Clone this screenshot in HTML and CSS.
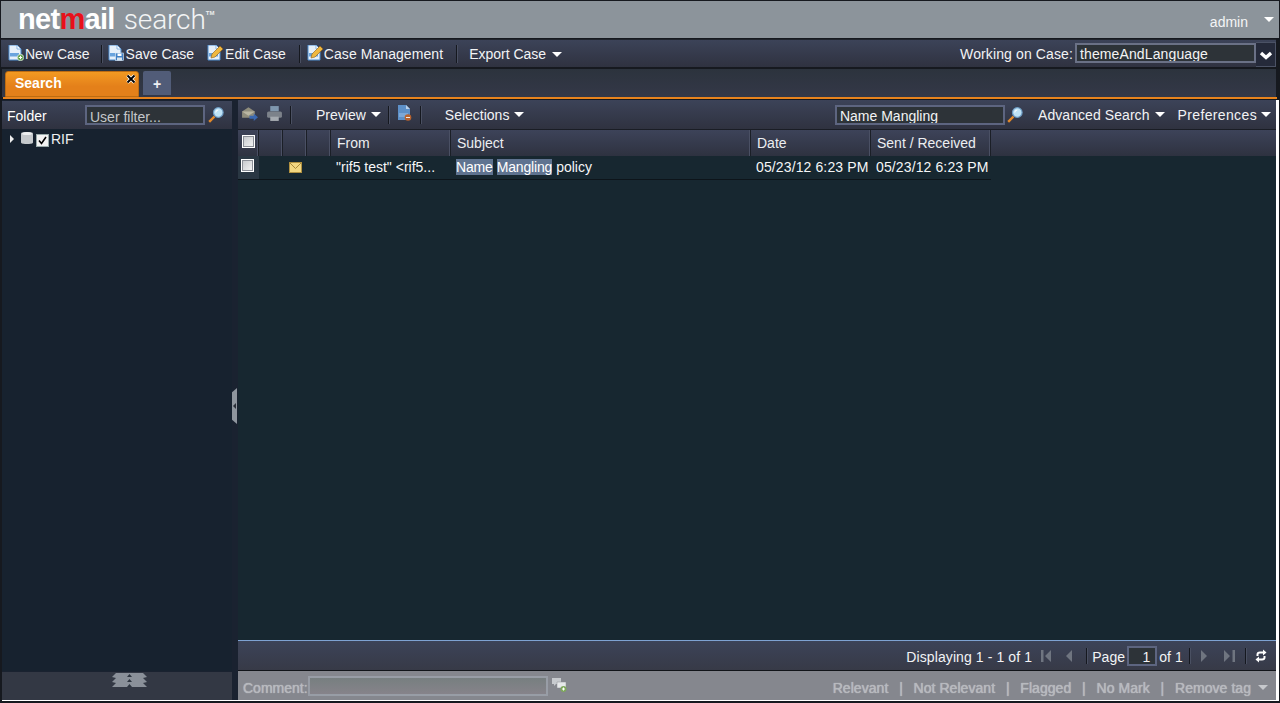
FILE: index.html
```html
<!DOCTYPE html>
<html lang="en">
<head>
<meta charset="utf-8">
<title>Netmail Search</title>
<link rel="stylesheet" href="styles.css">
</head>
<body>
<div class="app">
  <header class="brandbar">
    <div class="logo"><span class="logo-net">net<span class="logo-m">m</span>ail</span><span class="logo-search">search</span><span class="logo-tm">TM</span></div>
    <div class="user"><span>admin</span><i class="caret user-caret"></i></div>
  </header>

  <nav class="casebar">
    <a class="tool"><svg class="ico" viewBox="0 0 16 16"><use href="#doc"/><circle cx="12.500" cy="12.500" r="3.200" fill="#5fa04a" stroke="#fff" stroke-width=".6"/><path d="M10.800 12.500h3.400M12.500 10.800v3.400" stroke="#fff"/></svg>New Case</a>
    <i class="sep sep-new"></i>
    <a class="tool save"><svg class="ico" viewBox="0 0 16 16"><use href="#doc"/><rect x="7.500" y="8" width="8" height="7.500" fill="#3f7fc4" stroke="#e4eef8" stroke-width=".6"/><rect x="9.500" y="8.500" width="4" height="2.500" fill="#fff"/><rect x="9" y="12.500" width="5" height="3" fill="#d8e4ee"/></svg>Save Case</a>
    <a class="tool edit"><svg class="ico" viewBox="0 0 16 16"><use href="#doc"/><path d="M4 13l1-4 8-8 3 3-8 8z" fill="#f0b840" stroke="#8a5a18" stroke-width=".6"/></svg>Edit Case</a>
    <i class="sep sep-edit"></i>
    <a class="tool manage"><svg class="ico" viewBox="0 0 16 16"><use href="#doc"/><path d="M4 13l1-4 8-8 3 3-8 8z" fill="#f0b840" stroke="#8a5a18" stroke-width=".6"/></svg>Case Management</a>
    <i class="sep sep-wide"></i>
    <a class="tool export">Export Case<i class="caret"></i></a>
    <div class="case-select">
      <label class="case-label">Working on Case:</label>
      <div class="case-input">themeAndLanguage</div>
      <div class="case-btn"><svg viewBox="0 0 14 9" width="14" height="9"><path d="M2 2l5 4.500L12 2" fill="none" stroke="#fff" stroke-width="3.400"/></svg></div>
    </div>
  </nav>

  <div class="tabbar">
    <div class="tab-active">Search<svg class="tab-close" viewBox="0 0 10 10" width="10" height="10"><path d="M1.500 1.500l7 7M8.500 1.500l-7 7" stroke="#fff" stroke-width="3.400"/><path d="M1.500 1.500l7 7M8.500 1.500l-7 7" stroke="#000" stroke-width="1.800"/></svg></div>
    <div class="tab-add">+</div>
  </div>
  <div class="tab-rule"></div>

  <div class="workspace">
    <aside class="folders">
      <div class="folders-head">
        <span class="folders-title">Folder</span>
        <div class="field filter">User filter...</div>
        <svg class="lens" viewBox="0 0 16 16"><use href="#lens"/></svg>
      </div>
      <div class="tree">
        <div class="tree-row">
          <i class="tree-arrow"></i>
          <svg class="db" viewBox="0 0 12 14" width="12" height="14"><path d="M0 2.500C0 .5 12 .5 12 2.500V11.500C12 13.500 0 13.500 0 11.500Z" fill="#c5c9cc"/><ellipse cx="6" cy="2.500" rx="5" ry="1.600" fill="#eef0f1"/></svg>
          <svg class="tree-check" viewBox="0 0 13 13" width="13" height="13"><rect x=".5" y=".5" width="12" height="12" fill="#f2f2f2" stroke="#9aa"/><path d="M3 6.500l2.500 3L10 3" fill="none" stroke="#000" stroke-width="1.600"/></svg>
          <span>RIF</span>
        </div>
      </div>
      <div class="folders-foot">
        <svg viewBox="0 0 35 15" width="35" height="15"><path d="M4 0h27l4 4-4 1 4 4-4 1 4 4H0l4-4-4-1 4-4-4-1z" fill="#8a9099"/><path d="M17.500 1l2.500 3h-5zM17.500 6l2.500 3h-5zM17.500 11l2.500 3h-5z" fill="#2e3540"/></svg>
      </div>
      <div class="grip"><i></i></div>
    </aside>

    <main class="results">
      <div class="res-toolbar">
        <svg class="ico-sm first" viewBox="0 0 16 16"><path d="M1 6l6-4 6 4v6H1z" fill="#8f8d7c"/><path d="M1 6l6 4 6-4" fill="#b9b6a2"/><path d="M8 10h4V8l4 3.500-4 3.500v-2H8z" fill="#3a68b0"/></svg>
        <svg class="ico-sm" viewBox="0 0 16 16"><rect x="4" y="1" width="8" height="5" fill="#7f97ae"/><rect x="1" y="6" width="14" height="6" rx="1.500" fill="#7c828a"/><rect x="4" y="11" width="8" height="4" fill="#a5aab0"/></svg>
        <i class="sep sep-tall"></i>
        <a class="tool pv">Preview<i class="caret"></i></a>
        <i class="sep sep-tall"></i>
        <svg class="ico del" viewBox="0 0 16 16"><path d="M2 0h8l4 4v11H2z" fill="#5d90c8"/><path d="M10 0v4h4z" fill="#b8d0ea"/><rect x="3" y="8" width="9" height="4" fill="#7ca8d8"/><circle cx="12" cy="12.500" r="3.300" fill="#b8622e"/><path d="M10 12.500h4" stroke="#eee"/></svg>
        <i class="sep sep-tall sep-after-del"></i>
        <a class="tool sel">Selections<i class="caret"></i></a>
        <div class="spacer"></div>
        <div class="field query">Name Mangling</div>
        <svg class="lens" viewBox="0 0 16 16"><use href="#lens"/></svg>
        <a class="tool adv">Advanced Search<i class="caret"></i></a>
        <a class="tool prefs">Preferences<i class="caret"></i></a>
      </div>

      <div class="grid-head">
        <div class="hcell c-check"><i class="box"></i></div>
        <div class="hcell c-a"></div>
        <div class="hcell c-b"></div>
        <div class="hcell c-c"></div>
        <div class="hcell c-from">From</div>
        <div class="hcell c-subject">Subject</div>
        <div class="hcell c-date">Date</div>
        <div class="hcell c-sent">Sent / Received</div>
        <div class="hcell c-rest"></div>
      </div>

      <div class="grid-body">
        <div class="row">
          <div class="cell c-check check-cell"><i class="box"></i></div>
          <div class="cell c-a"></div>
          <div class="cell c-b env"><svg viewBox="0 0 13 11" width="13" height="11"><rect x=".5" y=".5" width="12" height="10" fill="#f2d680" stroke="#b09040"/><path d="M.5.5l6 6 6-6" fill="none" stroke="#a88838"/></svg></div>
          <div class="cell c-c"></div>
          <div class="cell c-from">"rif5 test" &lt;rif5...</div>
          <div class="cell c-subject"><mark>Name</mark> <mark>Mangling</mark> policy</div>
          <div class="cell c-date">05/23/12 6:23 PM</div>
          <div class="cell c-sent">05/23/12 6:23 PM</div>
        </div>
      </div>

      <div class="pager">
        <span class="ptext">Displaying 1 - 1 of 1</span>
        <svg class="pg pg-first" viewBox="0 0 10 12" width="10" height="12"><path d="M0 0h2.500v12H0zM10 0v12L4 6z" fill="#6f7580"/></svg>
        <svg class="pg pg-prev" viewBox="0 0 10 12" width="10" height="12"><path d="M8 0v12L2 6z" fill="#6f7580"/></svg>
        <i class="sep sep-a"></i>
        <span class="ptext">Page</span>
        <div class="field page-num">1</div>
        <span class="ptext">of 1</span>
        <i class="sep sep-b"></i>
        <svg class="pg pg-next" viewBox="0 0 10 12" width="10" height="12"><path d="M2 0v12l6-6z" fill="#6f7580"/></svg>
        <svg class="pg pg-last" viewBox="0 0 11 12" width="11" height="12"><path d="M11 0H8.500v12H11zM0 0v12l6-6z" fill="#6f7580"/></svg>
        <i class="sep sep-c"></i>
        <svg class="refresh" viewBox="0 0 12 14" width="12" height="14"><path d="M2.500 7V5.500Q2.500 3.500 5 3.500H8" fill="none" stroke="#fff" stroke-width="2"/><path d="M8 .5L11.500 3.500 8 6.500z" fill="#fff"/><path d="M9.500 7V8.500Q9.500 10.500 7 10.500H4" fill="none" stroke="#fff" stroke-width="2"/><path d="M4 7.500L.5 10.500 4 13.500z" fill="#fff"/></svg>
      </div>

      <div class="tagbar">
        <label class="dim">Comment:</label>
        <div class="comment-input"></div>
        <svg class="comment-ico" viewBox="0 0 17 16" width="17" height="16"><path d="M1 1h9v6H5L3 9V7H1z" fill="#c7cace"/><path d="M6 5h9v6h-2v2l-2-2H6z" fill="#e6e8ea" stroke="#8b8d92" stroke-width=".5"/><circle cx="12.500" cy="12" r="3" fill="#7ea85c"/><path d="M11 12h3M12.500 10.500v3" stroke="#fff"/></svg>
        <div class="spacer"></div>
        <span class="dim tag">Relevant</span><span class="dim bar">|</span>
        <span class="dim tag">Not Relevant</span><span class="dim bar">|</span>
        <span class="dim tag">Flagged</span><span class="dim bar">|</span>
        <span class="dim tag">No Mark</span><span class="dim bar">|</span>
        <span class="dim tag">Remove tag</span><i class="caret tag-caret"></i>
      </div>
    </main>
  </div>
</div>

<svg class="defs" width="0" height="0">
  <defs>
    <g id="doc">
      <path d="M1 0h8l4 4v11H1z" fill="#e6f0fa" stroke="#4f8ed0"/>
      <path d="M9 0v4h4z" fill="#fff" stroke="#4f8ed0" stroke-width=".6"/>
      <rect x="2" y="8" width="9" height="3.500" fill="#6aa4de"/>
    </g>
    <g id="lens">
      <path d="M1.200 14.800L6.500 9.500" stroke="#e58a2a" stroke-width="2.400"/>
      <circle cx="10.300" cy="5.500" r="4.800" fill="#bfe3f6" stroke="#6d9cc4" stroke-width="1.200"/>
      <path d="M7.800 5.500a2.500 2.500 0 0 1 2.500-2.500" stroke="#fff" fill="none"/>
    </g>
  </defs>
</svg>
</body>
</html>
```

FILE: styles.css
```css
* { box-sizing: border-box; }
html, body { margin: 0; height: 100%; overflow: hidden; }
body {
  background: #16191f;
  color: #fff;
  font: 14px/16px "Liberation Sans", Arial, sans-serif;
}
i { display: block; font-style: normal; }
.defs { position: absolute; }

.app {
  width: 1280px;
  height: 703px;
  padding: 1px 1px 0 1px;
  display: flex;
  flex-direction: column;
}

/* brand bar */
.brandbar {
  height: 37px;
  flex: none;
  background: #8c949b;
  display: flex;
  align-items: center;
  justify-content: space-between;
  padding: 0 5px 0 17px;
}
.logo { display: flex; align-items: baseline; height: 37px; line-height: 36px; }
.logo-net {
  font: 700 29px/36px "Liberation Sans", sans-serif;
  letter-spacing: -.7px;
  color: #fff;
}
.logo-m { color: #e8101a; }
.logo-search {
  font: 300 28px/36px Roboto, sans-serif;
  color: #f3f4f5;
  margin-left: 9px;
  letter-spacing: -.1px;
}
.logo-tm { font: 700 6px/6px "Liberation Sans", sans-serif; align-self: flex-start; margin-top: 9px; color: #eee; }
.user { display: flex; align-items: center; color: #f4f5f6; margin-top: 4px; }
.user-caret { margin-left: 16px; margin-top: -4px; }

.caret {
  width: 0;
  height: 0;
  border-left: 5px solid transparent;
  border-right: 5px solid transparent;
  border-top: 5px solid #fff;
}

/* case bar */
.casebar {
  height: 29px;
  flex: none;
  margin: 1px 3px 0 0;
  padding: 1px 0 0 7px;
  border-top: 1px solid #20242c;
  border-bottom: 1px solid #16191f;
  background: linear-gradient(#3c4358, #2f3240);
  display: flex;
  align-items: center;
}
.tool { display: flex; align-items: center; color: #f2f3f5; white-space: nowrap; }
.tool .caret { margin-left: 5px; }
.ico { width: 16px; height: 16px; margin-right: 1px; flex: none; margin-top: -3px; }
.save .ico, .edit .ico { margin-right: 2px; }
.edit { margin-left: 13px; }
.manage { letter-spacing: .07px; }
.export .caret { margin-left: 6px; }
.sep { width: 1px; height: 18px; background: #15181f; border-right: 1px solid #4a5062; box-sizing: content-box; flex: none; }
.sep-new { margin: 0 5px 0 11px; }
.sep-edit { margin: 0 6px 0 13px; }
.sep-wide { margin: 0 11px 0 13px; }
.case-select { margin-left: auto; display: flex; align-items: center; }
.case-label { margin-right: 2px; color: #f2f3f5; letter-spacing: .12px; }
.case-input {
  width: 181px;
  height: 20px;
  margin-top: -2px;
  border: 2px solid #6a7186;
  background: #2d3338;
  padding: 1px 0 0 3px;
  color: #f4f4f4;
  line-height: 16px;
  letter-spacing: .12px;
  overflow: hidden;
}
.case-btn {
  width: 20px;
  height: 25px;
  margin-top: 1px;
  padding-top: 2px;
  border: 1px solid #4b5265;
  border-left: 0;
  background: #252a3a;
  display: flex;
  align-items: center;
  justify-content: center;
}

/* tabs */
.tabbar {
  height: 28px;
  flex: none;
  margin: 1px 3px 0 1px;
  padding: 2px 0 0 3px;
  background: linear-gradient(#2c333d, #343848);
  display: flex;
  gap: 4px;
  align-items: flex-start;
}
.tab-active {
  position: relative;
  width: 134px;
  height: 26px;
  padding: 3px 0 0 9px;
  border: 1px solid #bd6c12;
  border-radius: 3px 3px 0 0;
  background: linear-gradient(#f39a22, #e4801a 60%);
  font-weight: 700;
  color: #fff;
}
.tab-close { position: absolute; top: 2px; right: 2px; }
.tab-add {
  width: 28px;
  height: 24px;
  background: #515c78;
  border-radius: 2px 2px 0 0;
  text-align: center;
  line-height: 26px;
  color: #eef0f4;
  font-weight: 700;
}
.tab-rule { height: 2px; flex: none; margin: 0 2px 0 2px; background: #e8831d; }

/* workspace */
.workspace {
  flex: 1;
  min-height: 0;
  display: flex;
  margin: 1px 0 2px 1px;
  padding-right: 3px;
  background: #1a2230;
  border-bottom: 1px solid #fff;
}
.folders {
  position: relative;
  width: 230px;
  flex: none;
  margin-top: 1px;
  display: flex;
  flex-direction: column;
}
.folders-head {
  height: 28px;
  flex: none;
  background: linear-gradient(#3c4358, #2f3240);
  display: flex;
  align-items: center;
  padding-left: 5px;
}
.folders-title { width: 78px; padding-top: 2px; }
.field {
  border: 2px solid #5d6580;
  background: #2d3338;
  color: #d8dadc;
  padding: 2px 0 0 3px;
  line-height: 16px;
  overflow: hidden;
}
.filter { width: 120px; height: 20px; color: #c4c7c9; }
.lens { width: 16px; height: 16px; margin-left: 3px; flex: none; }
.tree { flex: 1; background: #17222f; padding: 2px 0 0 8px; }
.tree-row { display: flex; align-items: center; height: 16px; color: #eef0f2; }
.tree-arrow { width: 0; height: 0; border-top: 4px solid transparent; border-bottom: 4px solid transparent; border-left: 4px solid #eee; margin-right: 7px; }
.db { margin-right: 3px; margin-top: -2px; }
.tree-check { margin-right: 2px; margin-top: 2px; }
.folders-foot {
  height: 28px;
  flex: none;
  margin-top: 1px;
  background: #333844;
  display: flex;
  justify-content: center;
  padding: 1px 0 0 25px;
}
.grip {
  position: absolute;
  left: 230px;
  top: 287px;
  width: 5px;
  height: 36px;
  background: #8f969e;
  clip-path: polygon(100% 0, 100% 100%, 0 88%, 0 12%);
  display: flex;
  align-items: center;
}
.grip i { width: 0; height: 0; border-top: 3px solid transparent; border-bottom: 3px solid transparent; border-right: 3px solid #2a2f38; margin-left: 1px; }

.results {
  flex: 1;
  min-width: 0;
  margin-left: 6px;
  display: flex;
  flex-direction: column;
  position: relative;
}
.results::after { content: ""; position: absolute; top: 0; bottom: 0; right: -3px; width: 3px; background: #fff; }
.res-toolbar {
  height: 30px;
  flex: none;
  background: linear-gradient(#3c4358, #2f3240);
  border-bottom: 1px solid #1a1d25;
  display: flex;
  align-items: center;
  padding-right: 5px;
}
.ico-sm { width: 17px; height: 17px; flex: none; margin-left: 8px; margin-top: -2px; }
.ico-sm.first { margin-left: 3px; }
.sep-tall { margin: 0 0 0 7px; }
.sep-after-del { margin-left: 8px; }
.pv { margin-left: 24px; }
.del { margin: -3px 0 0 6px; }
.sel { margin-left: 23px; }
.spacer { flex: 1; }
.query { width: 170px; height: 20px; padding-top: 1px; color: #f2f3f4; }
.res-toolbar .lens { margin-left: 2px; }
.adv { margin-left: 15px; letter-spacing: .07px; }
.prefs { margin-left: 13px; letter-spacing: .36px; }
.prefs .caret { margin-left: 4px; }

.grid-head, .row { display: flex; }
.grid-head { height: 26px; flex: none; background: linear-gradient(#3d4359, #2e3240); }
.hcell { border-right: 1px solid #1b1f27; padding: 5px 0 0 6px; color: #eceef1; height: 26px; flex: none; box-shadow: inset -1px 0 0 #4a5064; }
.c-check { width: 21px; }
.c-a { width: 24px; }
.c-b { width: 24px; }
.c-c { width: 24px; }
.c-from { width: 120px; }
.c-subject { width: 300px; }
.c-date { width: 120px; }
.c-sent { width: 120px; }
.hcell.c-rest { flex: 1; border: 0; box-shadow: none; }
.box { width: 13px; height: 13px; background: linear-gradient(135deg, #c3c6ca, #f5f5f5); border: 1px solid #fff; outline: 1px solid #8a8e96; outline-offset: -2px; margin-left: -2px; }

.grid-body { flex: 1; background: #172730; min-height: 0; }
.row { height: 24px; border-bottom: 1px solid #0d141a; width: 753px; }
.cell { flex: none; padding: 3px 0 0 5px; color: #f5f6f7; white-space: nowrap; overflow: hidden; }
.check-cell { background: #2a3743; padding: 3px 0 0 3px; }
.check-cell .box { margin: 0; }
.cell.env { padding: 4px 0 0 6px; }
.cell.c-date, .cell.c-sent { letter-spacing: .12px; }
mark { background: #5f7390; color: #fff; letter-spacing: -.15px; }

.pager {
  height: 31px;
  flex: none;
  border-top: 1px solid #7ea2d2;
  border-bottom: 1px solid #111419;
  background: linear-gradient(#3c4358, #373a47);
  display: flex;
  align-items: center;
  justify-content: flex-end;
  padding-right: 9px;
  color: #f2f3f5;
}
.ptext { padding-top: 2px; letter-spacing: .1px; }
.pg { flex: none; }
.pg-first { margin-left: 9px; }
.pg-prev { margin-left: 13px; }
.pg-next { margin-left: 8px; }
.pg-last { margin-left: 15px; }
.sep-a, .sep-b, .sep-c { height: 16px; }
.sep-a { margin: 0 4px 0 12px; }
.sep-b { margin-left: 6px; }
.sep-c { margin-left: 10px; }
.page-num { width: 30px; height: 20px; margin: 0 2px; text-align: right; padding: 3px 5px 0 0; line-height: 13px; color: #f2f3f5; }
.refresh { margin-left: 8px; }

.tagbar {
  height: 29px;
  flex: none;
  background: #85878e;
  display: flex;
  align-items: center;
  padding: 1px 8px 0 5px;
}
.dim { color: #b7b9be; padding-top: 4px; text-shadow: 0 0 1px rgba(235, 236, 238, .7); }
.tag { letter-spacing: .05px; }
.bar { margin: 0 10.800px; }
.comment-input { width: 240px; height: 20px; border: 2px solid #989da6; background: linear-gradient(#777f80, #86838a); }
.comment-ico { margin-left: 3px; margin-top: -2px; }
.tag-caret { margin-left: 7px; margin-top: 2px; border-top-color: #c6c8cc; }
```
